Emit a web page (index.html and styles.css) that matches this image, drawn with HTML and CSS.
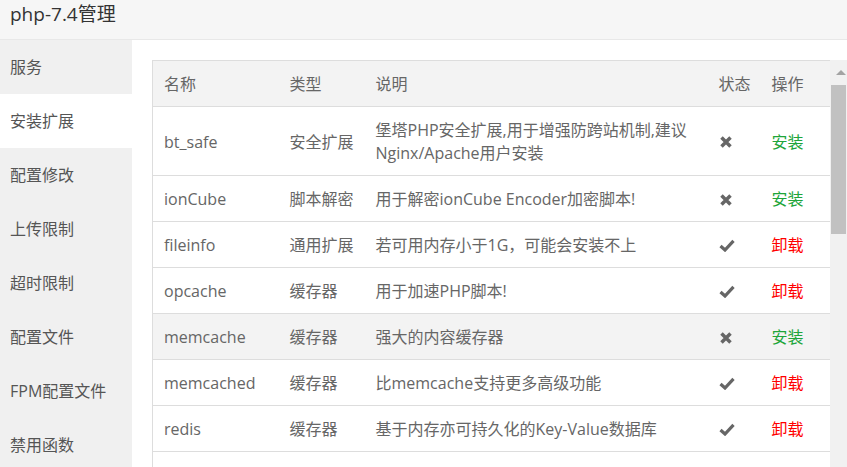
FILE: index.html
```html
<!DOCTYPE html>
<html lang="zh-CN">
<head>
<meta charset="utf-8">
<title>php-7.4管理</title>
<link rel="stylesheet" href="styles.css">
</head>
<body>
<div class="window">
  <div class="titlebar">php-7.4管理</div>
  <div class="main">
    <nav class="menu">
      <p class="item">服务</p>
      <p class="item active">安装扩展</p>
      <p class="item">配置修改</p>
      <p class="item">上传限制</p>
      <p class="item">超时限制</p>
      <p class="item">配置文件</p>
      <p class="item">FPM配置文件</p>
      <p class="item">禁用函数</p>
    </nav>
    <section class="content">
      <div class="scrollbox">
        <div class="tablewrap">
          <table class="ext">
            <colgroup>
              <col class="c-name"><col class="c-type"><col class="c-desc"><col class="c-state"><col class="c-op">
            </colgroup>
            <thead>
              <tr><th>名称</th><th>类型</th><th>说明</th><th>状态</th><th>操作</th></tr>
            </thead>
            <tbody>
              <tr>
                <td>bt_safe</td><td>安全扩展</td>
                <td>堡塔PHP安全扩展,用于增强防跨站机制,建议<br>Nginx/Apache用户安装</td>
                <td><svg class="ico-x" viewBox="0 0 14 12"><path d="M2.5 1.5 L11.5 10.5 M11.5 1.5 L2.5 10.5"/></svg></td>
                <td><a class="install">安装</a></td>
              </tr>
              <tr>
                <td>ionCube</td><td>脚本解密</td><td>用于解密ionCube Encoder加密脚本!</td>
                <td><svg class="ico-x" viewBox="0 0 14 12"><path d="M2.5 1.5 L11.5 10.5 M11.5 1.5 L2.5 10.5"/></svg></td>
                <td><a class="install">安装</a></td>
              </tr>
              <tr>
                <td>fileinfo</td><td>通用扩展</td><td>若可用内存小于1G，可能会安装不上</td>
                <td><svg class="ico-ok" viewBox="0 0 16 13"><path d="M1.5 7 L6 11 L14.5 1.8"/></svg></td>
                <td><a class="remove">卸载</a></td>
              </tr>
              <tr>
                <td>opcache</td><td>缓存器</td><td>用于加速PHP脚本!</td>
                <td><svg class="ico-ok" viewBox="0 0 16 13"><path d="M1.5 7 L6 11 L14.5 1.8"/></svg></td>
                <td><a class="remove">卸载</a></td>
              </tr>
              <tr class="hover">
                <td>memcache</td><td>缓存器</td><td>强大的内容缓存器</td>
                <td><svg class="ico-x" viewBox="0 0 14 12"><path d="M2.5 1.5 L11.5 10.5 M11.5 1.5 L2.5 10.5"/></svg></td>
                <td><a class="install">安装</a></td>
              </tr>
              <tr>
                <td>memcached</td><td>缓存器</td><td>比memcache支持更多高级功能</td>
                <td><svg class="ico-ok" viewBox="0 0 16 13"><path d="M1.5 7 L6 11 L14.5 1.8"/></svg></td>
                <td><a class="remove">卸载</a></td>
              </tr>
              <tr>
                <td>redis</td><td>缓存器</td><td>基于内存亦可持久化的Key-Value数据库</td>
                <td><svg class="ico-ok" viewBox="0 0 16 13"><path d="M1.5 7 L6 11 L14.5 1.8"/></svg></td>
                <td><a class="remove">卸载</a></td>
              </tr>
              <tr class="partial">
                <td></td><td></td><td></td>
                <td><svg class="ico-ok" viewBox="0 0 16 13"><path d="M1.5 7 L6 11 L14.5 1.8"/></svg></td>
                <td></td>
              </tr>
            </tbody>
          </table>
        </div>
        <div class="scrollbar">
          <div class="sb-up"><span class="sb-arrow"></span></div>
          <div class="sb-thumb"></div>
        </div>
      </div>
    </section>
  </div>
</div>
</body>
</html>
```

FILE: styles.css
```css
html, body {
  margin: 0;
  padding: 0;
  background: #fff;
}
body {
  font-family: "Open Sans", "Noto Sans CJK SC", sans-serif;
  color: #666;
  overflow: hidden;
}
.window {
  width: 847px;
  height: 467px;
  display: flex;
  flex-direction: column;
  overflow: hidden;
}
.titlebar {
  flex: 0 0 auto;
  height: 40px;
  box-sizing: border-box;
  background: #f6f6f6;
  border-bottom: 1px solid #e8e8e8;
  padding-left: 10px;
  font-size: 19px;
  line-height: 28px;
  color: #333;
}
.main {
  flex: 1;
  min-height: 0;
  display: flex;
}
.menu {
  width: 132px;
  flex: 0 0 132px;
  background: #f0f0f0;
}
.item {
  margin: 0;
  height: 54px;
  line-height: 55px;
  padding-left: 10px;
  font-size: 16px;
  color: #555;
  white-space: nowrap;
}
.item.active {
  background: #fff;
}
.content {
  flex: 1;
  min-width: 0;
  padding: 20px 0 0 20px;
}
.scrollbox {
  display: flex;
  height: 100%;
  overflow: hidden;
}
.tablewrap {
  width: 678px;
  flex: 0 0 678px;
}
.ext {
  width: 678px;
  table-layout: fixed;
  border-collapse: collapse;
  border: 1px solid #ddd;
  font-size: 16px;
  line-height: 23px;
  color: #666;
}
.c-name { width: 125px; }
.c-type { width: 86px; }
.c-desc { width: 343px; }
.c-state { width: 53px; }
.c-op { width: 71px; }
.ext th, .ext td {
  padding: 12px 0 10px 12px;
  border-bottom: 1px solid #ddd;
  text-align: left;
  vertical-align: middle;
  font-weight: normal;
  white-space: nowrap;
}
.ext th:first-child, .ext td:first-child {
  padding-left: 11px;
}
.ext thead tr {
  background: #f3f3f3;
}
.ext tr.hover {
  background: #f3f3f3;
}
.ext tr.partial td {
  height: 23px;
}
.ext svg {
  display: block;
  fill: none;
  stroke: #666;
}
.ico-x {
  width: 14px;
  height: 12px;
  stroke-width: 3.5;
}
.ico-ok {
  width: 16px;
  height: 13px;
  stroke-width: 3.2;
}
.install {
  color: #20a53a;
}
.remove {
  color: #f00;
}
.scrollbar {
  width: 17px;
  flex: 0 0 17px;
  background: #f1f1f1;
}
.sb-up {
  height: 25px;
  box-sizing: border-box;
  padding-top: 10px;
}
.sb-arrow {
  display: block;
  width: 0;
  height: 0;
  margin-left: 6px;
  border-left: 5px solid transparent;
  border-right: 5px solid transparent;
  border-bottom: 5px solid #a3a3a3;
}
.sb-thumb {
  height: 149px;
  margin: 0 1px;
  background: #c1c1c1;
}
```
